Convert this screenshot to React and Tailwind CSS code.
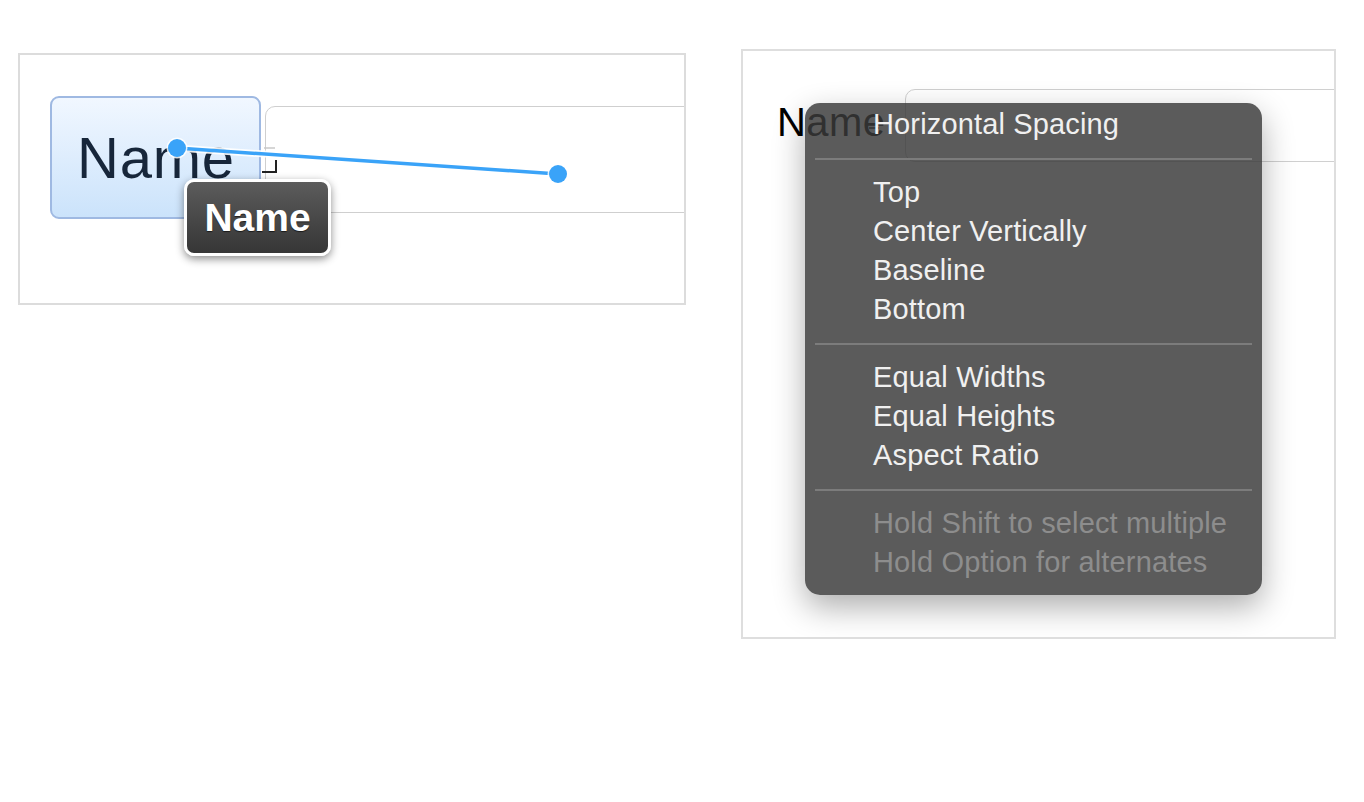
import React from "react";

const menuFont = { fontFamily: '"Liberation Sans", Arial, sans-serif' };

function Item({ children, disabled }) {
  return (
    <div
      className={`h-[39px] leading-[39px] pl-[68px] text-[29px] tracking-[0.15px] whitespace-nowrap ${
        disabled ? "text-[#8d8d8d]" : "text-[#f0f0f0]"
      }`}
    >
      {children}
    </div>
  );
}

function Sep() {
  return <div className="mx-[10px] mt-[14px] mb-[13px] h-[2px] bg-[#7c7c7c]" />;
}

export default function App() {
  return (
    <div className="w-[1364px] h-[802px] bg-white overflow-hidden" style={menuFont}>
      <div className="flex items-start pl-[18px] gap-[55px]">
        {/* Left panel */}
        <div className="relative mt-[53px] w-[668px] h-[252px] border-2 border-[#dcdcdc] overflow-hidden">
          <div className="flex items-start pl-[30px] pt-[41px]">
            <div className="w-[211px] h-[123px] rounded-[9px] border-2 border-[#9fb9e2] bg-gradient-to-b from-[#f1f7ff] to-[#cbe3fb] flex items-center pl-[25px] shrink-0">
              <span className="text-[58px] leading-none text-[#17263a] tracking-[0.8px]">Name</span>
            </div>
            <div className="ml-[4px] mt-[10px] w-[520px] h-[107px] rounded-tl-[10px] rounded-bl-[10px] border border-[#cfcfcf] shrink-0" />
          </div>
          <svg className="absolute left-0 top-0" width="668" height="252" viewBox="0 0 668 252">
            <path d="M244 93 L255 93" stroke="#c8c8c8" strokeWidth="1.5" fill="none" />
            <path d="M242 117 L256 117 L256 105" stroke="#222" strokeWidth="2" fill="none" />
            <line x1="157" y1="93" x2="538" y2="119" stroke="#ffffff" strokeOpacity="0.9" strokeWidth="7" strokeLinecap="round" />
            <line x1="157" y1="93" x2="538" y2="119" stroke="#3aa3f8" strokeWidth="3.5" strokeLinecap="round" />
            <circle cx="157" cy="93" r="10.5" fill="#ffffff" fillOpacity="0.85" />
            <circle cx="157" cy="93" r="9" fill="#3aa3f8" />
            <circle cx="538" cy="119" r="10.5" fill="#ffffff" fillOpacity="0.85" />
            <circle cx="538" cy="119" r="9" fill="#3aa3f8" />
          </svg>
          <div className="absolute left-[164px] top-[124px] w-[147px] h-[77px] rounded-[10px] border-[3px] border-white bg-gradient-to-b from-[#5c5c5c] to-[#363636] shadow-[0_3px_8px_rgba(0,0,0,0.45)] flex items-center justify-center">
            <span
              className="text-[39px] font-bold text-white leading-none"
              style={{ textShadow: "0 1px 1px rgba(0,0,0,0.6)" }}
            >
              Name
            </span>
          </div>
        </div>

        {/* Right panel */}
        <div className="relative mt-[49px] w-[595px] h-[590px] border-2 border-[#dedede] overflow-hidden">
          <div className="flex items-start pl-[34px] pt-[38px]">
            <span className="mt-[13px] text-[40px] leading-none text-black w-[128px] shrink-0 tracking-[0.4px]">Name</span>
            <div className="w-[460px] h-[73px] rounded-tl-[10px] rounded-bl-[10px] border border-[#d0d0d0] shrink-0" />
          </div>
          <div className="absolute left-[126px] top-[76px] w-[10px] h-[1.5px] bg-[#444]" />
          <div className="absolute left-[62px] top-[52px] w-[457px] h-[492px] rounded-[15px] bg-[rgba(58,58,58,0.83)] shadow-[0_12px_32px_rgba(0,0,0,0.32)] pt-[2px]">
            <Item>Horizontal Spacing</Item>
            <Sep />
            <Item>Top</Item>
            <Item>Center Vertically</Item>
            <Item>Baseline</Item>
            <Item>Bottom</Item>
            <Sep />
            <Item>Equal Widths</Item>
            <Item>Equal Heights</Item>
            <Item>Aspect Ratio</Item>
            <Sep />
            <Item disabled>Hold Shift to select multiple</Item>
            <Item disabled>Hold Option for alternates</Item>
          </div>
        </div>
      </div>
    </div>
  );
}
